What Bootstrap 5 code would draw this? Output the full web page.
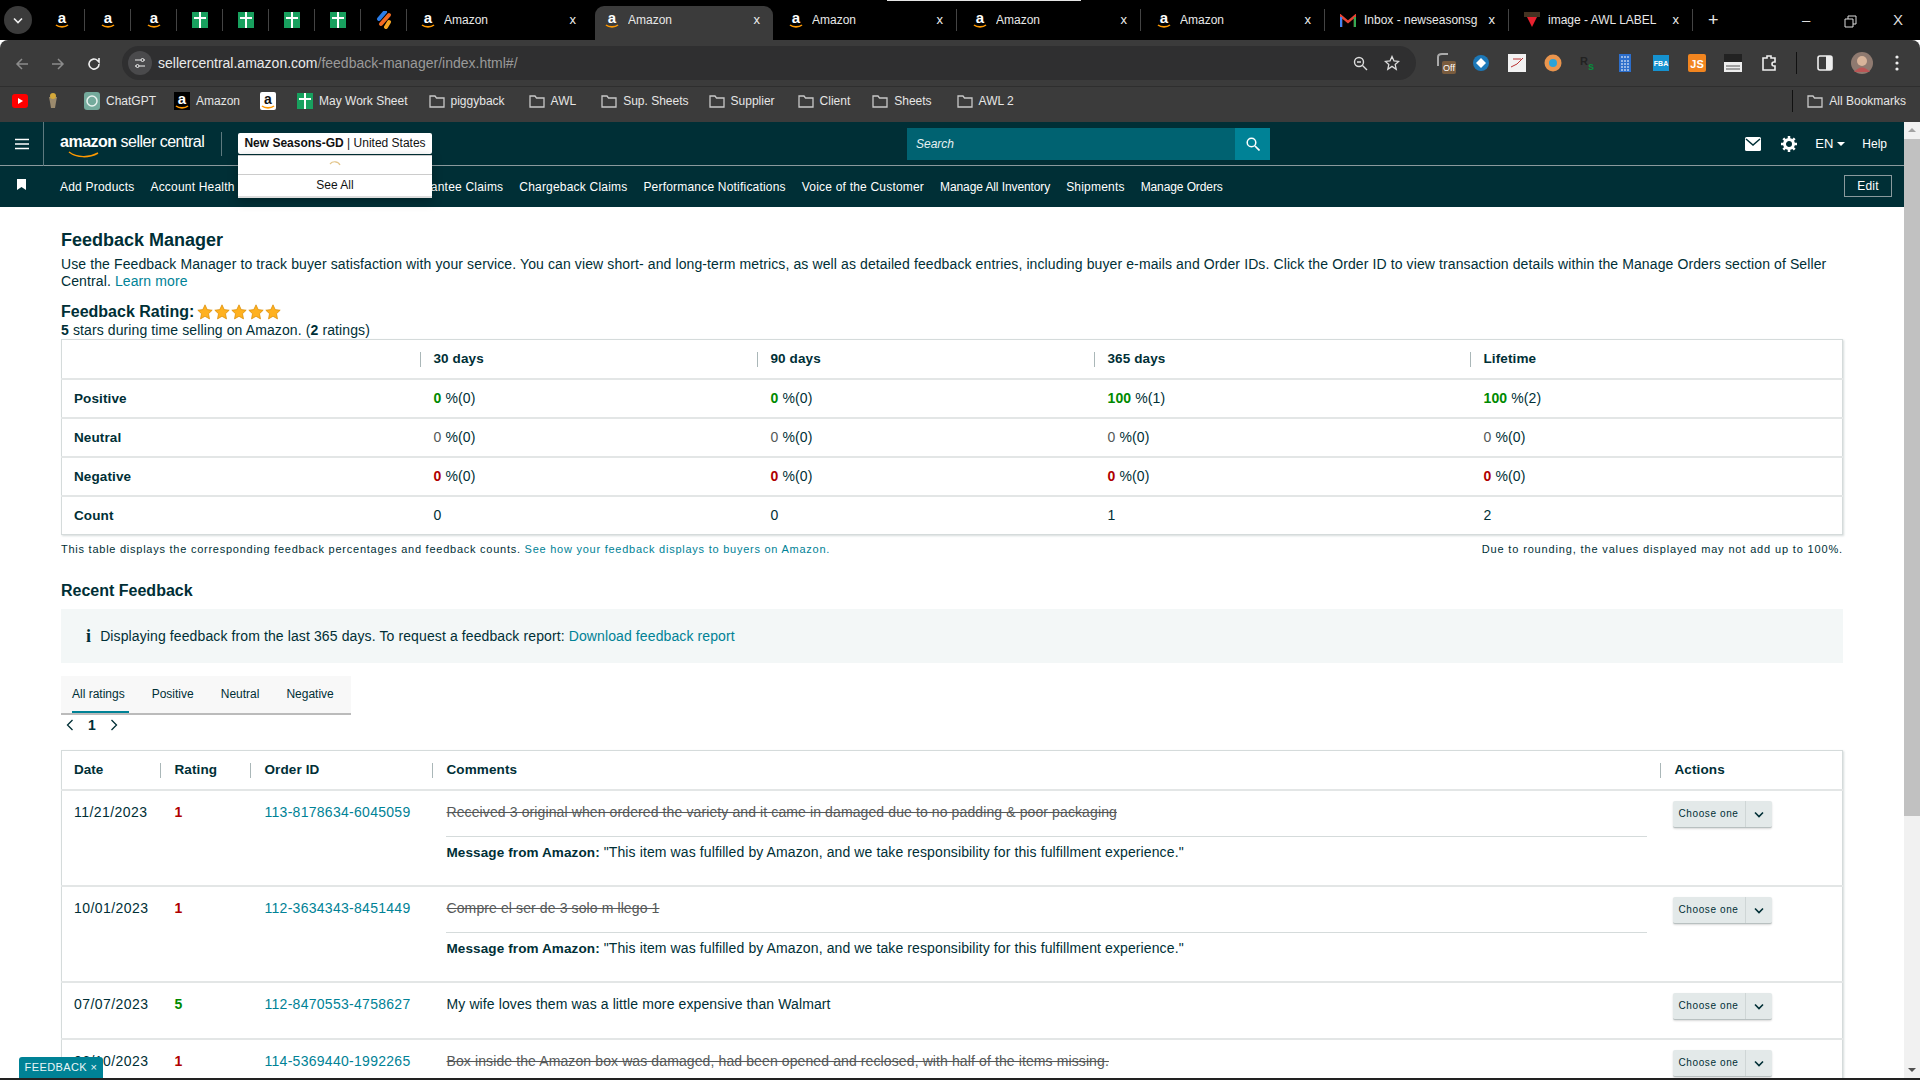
<!DOCTYPE html>
<html lang="en">
<head>
<meta charset="UTF-8">
<title>Feedback Manager</title>
<link href="https://cdn.jsdelivr.net/npm/bootstrap@5.3.0/dist/css/bootstrap.min.css" rel="stylesheet">
<style>
html, body { height: 100%; overflow: hidden; }
body { font-family: "Liberation Sans", Arial, sans-serif; font-size: 14px; color: #002f36; background: #fff; }
a { color: #008296; text-decoration: none; }
.page-wrap { height: 1080px; position: relative; overflow: hidden; }

/* chrome tab strip */
.tab-strip { height: 40px; background: #000; color: #e8e8e8; font-size: 12px; padding-left: 4px; position: relative; }
.top-flash { position: absolute; top: 0; left: 887px; width: 194px; height: 1px; background: #e5e5e5; }
.tab-chev { width: 28px; height: 28px; border-radius: 50%; background: #3b3b3b; margin-right: 7px; flex: none; }
.tab-small { width: 46px; height: 22px; flex: none; border-right: 1px solid #444; }
.tab-wide { width: 184px; height: 22px; flex: none; padding: 0 13px 0 15px; border-right: 1px solid #444; white-space: nowrap; }
.tab-first { width: 188px; padding: 0 19px 0 13px; border-right: 0; }
.tab-wide.tab-on { width: 178px; background: #3b3b3b; border-radius: 9px 9px 0 0; border: 0; height: 34px; margin-top: 6px; padding: 0 13px 6px 9px; }
.tab-title { flex: 1; overflow: hidden; }
.tab-x { font-size: 13px; color: #eee; }
.tab-plus { font-size: 18px; margin-left: 15px; }
.win-btn { position: absolute; top: 8px; color: #ddd; font-size: 15px; line-height: 24px; }

/* address + bookmarks */
.chrome-bar { height: 47px; background: #3b3b3b; border-bottom: 1px solid #2e2e2e; border-radius: 8px 8px 0 0; padding-left: 4px; }
.nav-arrow { width: 36px; flex: none; text-align: center; }
.addr-box { width: 1294px; height: 34px; background: #2f2f30; border-radius: 17px; margin-left: 10px; padding: 0 16px 0 6px; color: #9a9a9a; font-size: 14px; flex: none; }
.addr-host { color: #eaeaea; }
.addr-tune { width: 24px; height: 24px; border-radius: 50%; background: #4a4a4c; margin-right: 6px; }
.ext-icons { margin-left: 20px; gap: 18px; }
.ext-off { margin-right: -4px; }
.ext-side { margin-left: 2px; }
.ext-sep { width: 1px; height: 22px; background: #111; }
.mark-bar { height: 35px; background: #3b3b3b; color: #e6e6e6; font-size: 12px; padding: 0 0 7px 12px; }
.mark-item { display: flex; align-items: center; gap: 6px; white-space: nowrap; flex: none; }

/* seller central header */
.sc-top { height: 44px; background: #002f36; border-bottom: 1px solid #8a9a9d; color: #fff; position: relative; }
.sc-burger { width: 44px; height: 44px; border-right: 1px solid #5e7a7f; flex: none; }
.sc-logo { margin-left: 16px; width: 162px; border-right: 1px solid #5e7a7f; height: 24px; line-height: 20px; flex: none; position: relative; font-size: 16px; letter-spacing: -.5px; }
.sc-logo b { font-weight: 700; }
.sc-logo svg { position: absolute; left: 8px; top: 19px; }
.sc-account { margin-left: 16px; width: 194px; height: 21px; background: #fff; border-radius: 2px; color: #111; font-size: 12px; line-height: 21px; text-align: center; white-space: nowrap; flex: none; }
.sc-search { margin-left: 475px; width: 363px; height: 32px; background: #006271; flex: none; font-style: italic; font-size: 12px; color: #e8f2f3; padding-left: 9px; line-height: 32px; position: relative; }
.sc-search-btn { position: absolute; right: 0; top: 0; width: 35px; height: 32px; background: #008296; }
.sc-right { margin-left: auto; padding-right: 33px; font-size: 12px; }
.sc-gear { margin-left: 20px; }
.sc-lang { margin-left: 18px; font-size: 13px; }
.sc-drop { margin-left: 4px; width: 0; height: 0; border-left: 4px solid transparent; border-right: 4px solid transparent; border-top: 4px solid #fff; }
.sc-help { margin-left: 17px; }
.acct-menu { position: absolute; left: 238px; top: 155px; width: 194px; height: 43px; background: #fff; box-shadow: 0 3px 10px rgba(0,0,0,.25); border-bottom: 2px solid #ddd; z-index: 5; color: #111; font-size: 12px; text-align: center; }
.acct-spin { height: 20px; border-bottom: 1px solid #ccc; border-top: 1px solid #ccc; }
.acct-all { height: 21px; line-height: 21px; }
.sc-nav { height: 41px; background: #002f36; color: #fff; font-size: 12px; white-space: nowrap; position: relative; letter-spacing: .2px; }
.sc-mark { margin: 0 0 4px 17px; }
.sc-nav-links { gap: 16px; margin-left: 34px; }
.sc-nav-claims { margin-left: 116px; }
.sc-nav-tight { letter-spacing: -.1px; }
.sc-edit { position: absolute; left: 1844px; top: 9px; width: 48px; height: 22px; border: 1px solid #8a9a9d; text-align: center; line-height: 20px; }

/* content */
.scroll-track { position: absolute; right: 0; top: 122px; width: 16px; height: 956px; background: #f1f1f1; }
.scroll-thumb { position: absolute; left: 0; right: 0; top: 17px; height: 677px; background: #c1c1c1; }
.scroll-up, .scroll-down { position: absolute; left: 4px; width: 0; height: 0; border-left: 4px solid transparent; border-right: 4px solid transparent; }
.scroll-up { top: 6px; border-bottom: 4px solid #a3a3a3; }
.scroll-down { bottom: 6px; border-top: 4px solid #505050; }
.main-pane { padding: 0 77px 0 61px; height: 871px; overflow: hidden; letter-spacing: .11px; line-height: 17px; font-size: 14px; }
.head-big { font-size: 18px; font-weight: 700; line-height: 22px; margin: 0; padding-top: 22px; letter-spacing: 0; }
.intro-text { margin: 5px 0 0; }
.rating-line { font-size: 16px; font-weight: 700; margin-top: 12px; height: 20px; line-height: 20px; letter-spacing: 0; }
.stars-row { font-size: 0; margin-left: 3px; }
.stars-row svg { margin-right: 1px; }
.panel-table { width: 1782px; table-layout: fixed; border: 1px solid #d5dbdb; box-shadow: 1px 1px 2px #d5dbdb; margin: 0; --bs-table-color: #002f36; }
.panel-table th, .panel-table td { padding: 0 0 0 14px; border-bottom: 2px solid #e3e6e6; vertical-align: middle; height: 39px; }
.panel-table tr:last-child td { border-bottom: 0; }
.panel-table th { position: relative; font-weight: 700; font-size: 13.5px; }
.panel-table th.cut::before { content: ""; position: absolute; left: 0; top: 12px; height: 15px; width: 1px; background: #aab7b8; }
.panel-table .row-name { font-weight: 700; padding-left: 12px; font-size: 13.5px; }
.num-green { color: #008a00; font-weight: 700; }
.num-red { color: #b00000; font-weight: 700; }
.num-grey { color: #565959; }
.foot-note { width: 1782px; font-size: 11px; letter-spacing: .75px; padding-top: 7px; line-height: 15px; }
.foot-right { letter-spacing: .85px; }
.head-mid { font-size: 16px; font-weight: 700; line-height: 20px; margin: 0; padding-top: 24px; letter-spacing: 0; }
.info-box { width: 1782px; background: #f3f7f7; height: 54px; margin-top: 8px; padding-left: 25px; gap: 9px; }
.info-i { font-family: "Liberation Serif", serif; font-weight: 700; font-size: 18px; color: #002f36; }
.rate-tabs { width: 290px; height: 39px; margin-top: 13px; background: #f8f8f8; border-bottom: 2px solid #bbb; font-size: 12px; padding-left: 11px; gap: 27px; }
.rate-tab { height: 37px; line-height: 37px; position: relative; letter-spacing: 0; }
.rate-tab.rate-on::after { content: ""; position: absolute; left: 0; right: -4px; bottom: 0; height: 2px; background: #008296; }
.pager-row { height: 22px; gap: 14px; padding: 0 0 2px 5px; font-weight: 700; }
.fb-table { margin-top: 13px; }
.fb-table td { vertical-align: top; padding-top: 13px; }
.fb-table th, .fb-table td { padding-left: 15px; }
.fb-table th:first-child, .fb-table td:first-child { padding-left: 12px; letter-spacing: .45px; }
.fb-table th:first-child { letter-spacing: 0; }
.fb-table a { letter-spacing: .28px; }
.fb-table th { height: 39px; }
.fb-table td.tall-row { height: 96px; }
.fb-table td.short-row { height: 57px; }
.struck { text-decoration: line-through; color: #565959; }
.msg-line { border-top: 1px solid #d5dbdb; margin-top: 15px; padding-top: 7px; width: 1201px; margin-left: -1px; padding-left: 1px; }
.msg-line b { font-size: 13.5px; }
.act-btn { width: 99px; height: 27px; background: #e3e9e9; border: 0; border-bottom: 1px solid #b8c0c0; border-radius: 2px; box-shadow: 0 1px 2px rgba(0,0,0,.15); font-size: 10px; letter-spacing: .6px; color: #002f36; padding: 0; margin: -3px 0 0 -2px; }
.act-label { width: 73px; border-right: 1px solid #cfd6d6; height: 100%; line-height: 25px; text-align: center; }
.act-caret { flex: 1; }
.fb-tag { position: absolute; left: 19px; top: 1057px; width: 84px; height: 21px; background: #008296; color: #e9f5f6; font-size: 11px; line-height: 21px; text-align: center; border-radius: 3px 3px 0 0; z-index: 6; letter-spacing: .4px; }
.task-line { position: absolute; left: 0; right: 0; bottom: 0; height: 2px; background: #222; }
</style>
</head>
<body>
<svg width="0" height="0" class="position-absolute">
  <symbol id="ic-a" viewBox="0 0 16 18">
    <text x="8" y="11.500" text-anchor="middle" font-family="Liberation Sans" font-weight="700" font-size="15" fill="#fff">a</text>
    <path d="M2 14c3 2.500 9 2.500 12 0" fill="none" stroke="#f90" stroke-width="1.600"/>
  </symbol>
  <symbol id="ic-sheet" viewBox="0 0 16 16">
    <rect width="16" height="16" fill="#18a05e"/>
    <path d="M2 6h12M8 0v16" stroke="#fff" stroke-width="2"/>
  </symbol>
  <symbol id="ic-folder" viewBox="0 0 16 14">
    <path d="M1 2h5l1.500 2H15v9H1z" fill="none" stroke="#c8c8c8" stroke-width="1.300"/>
  </symbol>
  <symbol id="ic-star" viewBox="0 0 16 16">
    <path d="M8 .8l2.200 4.800 5 .6-3.700 3.500 1 5.200L8 12.300l-4.500 2.600 1-5.200L.8 6.200l5-.6z" fill="#ffb11f" stroke="#d98a00" stroke-width=".7"/>
  </symbol>
  <symbol id="ic-caret" viewBox="0 0 10 7">
    <path d="M1 1.500l4 4 4-4" fill="none" stroke="#002f36" stroke-width="1.600"/>
  </symbol>
</svg>

<div class="page-wrap">
  <div class="tab-strip d-flex align-items-center">
    <div class="top-flash"></div>
    <div class="tab-chev d-flex align-items-center justify-content-center"><svg width="10" height="7" viewBox="0 0 10 7"><path d="M1 1.500l4 4 4-4" fill="none" stroke="#eee" stroke-width="1.600"/></svg></div>
    <div class="tab-small d-flex align-items-center justify-content-center"><svg width="16" height="18"><use href="#ic-a"/></svg></div>
    <div class="tab-small d-flex align-items-center justify-content-center"><svg width="16" height="18"><use href="#ic-a"/></svg></div>
    <div class="tab-small d-flex align-items-center justify-content-center"><svg width="16" height="18"><use href="#ic-a"/></svg></div>
    <div class="tab-small d-flex align-items-center justify-content-center"><svg width="16" height="16"><use href="#ic-sheet"/></svg></div>
    <div class="tab-small d-flex align-items-center justify-content-center"><svg width="16" height="16"><use href="#ic-sheet"/></svg></div>
    <div class="tab-small d-flex align-items-center justify-content-center"><svg width="16" height="16"><use href="#ic-sheet"/></svg></div>
    <div class="tab-small d-flex align-items-center justify-content-center"><svg width="16" height="16"><use href="#ic-sheet"/></svg></div>
    <div class="tab-small d-flex align-items-center justify-content-center">
      <svg width="16" height="18" viewBox="0 0 16 18"><path d="M9 1L3 8" stroke="#2b7de9" stroke-width="4" stroke-linecap="round"/><path d="M13 4L5 13" stroke="#f26a21" stroke-width="4" stroke-linecap="round"/><path d="M13 11l-3 5" stroke="#f5a623" stroke-width="4" stroke-linecap="round"/></svg>
    </div>
    <div class="tab-wide tab-first d-flex align-items-center gap-2"><svg width="16" height="18"><use href="#ic-a"/></svg><span class="tab-title">Amazon</span><span class="tab-x">x</span></div>
    <div class="tab-wide tab-on d-flex align-items-center gap-2"><svg width="16" height="18"><use href="#ic-a"/></svg><span class="tab-title">Amazon</span><span class="tab-x">x</span></div>
    <div class="tab-wide d-flex align-items-center gap-2"><svg width="16" height="18"><use href="#ic-a"/></svg><span class="tab-title">Amazon</span><span class="tab-x">x</span></div>
    <div class="tab-wide d-flex align-items-center gap-2"><svg width="16" height="18"><use href="#ic-a"/></svg><span class="tab-title">Amazon</span><span class="tab-x">x</span></div>
    <div class="tab-wide d-flex align-items-center gap-2"><svg width="16" height="18"><use href="#ic-a"/></svg><span class="tab-title">Amazon</span><span class="tab-x">x</span></div>
    <div class="tab-wide d-flex align-items-center gap-2">
      <svg width="16" height="13" viewBox="0 0 16 13"><path d="M1 13V2l7 6 7-6v11" fill="none" stroke="#ea4335" stroke-width="2.400"/><path d="M1 13V3" stroke="#4285f4" stroke-width="2.400"/><path d="M15 13V3" stroke="#34a853" stroke-width="2.400"/></svg>
      <span class="tab-title">Inbox - newseasonsg</span><span class="tab-x">x</span></div>
    <div class="tab-wide d-flex align-items-center gap-2">
      <svg width="16" height="16" viewBox="0 0 16 16"><rect width="16" height="5" fill="#432"/><path d="M3 5h10l-5 10z" fill="#e8212f"/></svg>
      <span class="tab-title">image - AWL LABEL</span><span class="tab-x">x</span></div>
    <span class="tab-plus">+</span>
    <span class="win-btn" style="left:1802px">&#8211;</span>
    <span class="win-btn" style="left:1844px"><svg width="13" height="13" viewBox="0 0 13 13"><path d="M1 4h8v8H1zM4 4V1h8v8H9" fill="none" stroke="#ddd"/></svg></span>
    <span class="win-btn" style="left:1893px">X</span>
  </div>

  <div class="chrome-bar d-flex align-items-center">
    <div class="nav-arrow"><svg width="14" height="14" viewBox="0 0 14 14"><path d="M13 7H2M7 2L2 7l5 5" fill="none" stroke="#8c8c8c" stroke-width="1.500"/></svg></div>
    <div class="nav-arrow"><svg width="14" height="14" viewBox="0 0 14 14"><path d="M1 7h11M7 2l5 5-5 5" fill="none" stroke="#8c8c8c" stroke-width="1.500"/></svg></div>
    <div class="nav-arrow"><svg width="14" height="14" viewBox="0 0 14 14"><path d="M12 7a5 5 0 1 1-1.500-3.500L12 5V1" fill="none" stroke="#eee" stroke-width="1.600"/></svg></div>
    <div class="addr-box d-flex align-items-center">
      <div class="addr-tune d-flex align-items-center justify-content-center"><svg width="12" height="12" viewBox="0 0 12 12"><path d="M1 3h6M10 3h1M1 9h1M5 9h6" stroke="#eee" stroke-width="1.200"/><circle cx="8.500" cy="3" r="1.500" fill="none" stroke="#eee"/><circle cx="3.500" cy="9" r="1.500" fill="none" stroke="#eee"/></svg></div>
      <span><span class="addr-host">sellercentral.amazon.com</span>/feedback-manager/index.html#/</span>
      <span class="ms-auto d-flex align-items-center gap-3">
        <svg width="15" height="15" viewBox="0 0 15 15"><circle cx="6" cy="6" r="4.500" fill="none" stroke="#ddd" stroke-width="1.400"/><path d="M9.500 9.500L14 14M4 6h4" stroke="#ddd" stroke-width="1.400"/></svg>
        <svg width="16" height="16" viewBox="0 0 16 16"><path d="M8 1.500l2 4.400 4.700.5-3.500 3.200 1 4.600L8 11.400l-4.200 2.800 1-4.600L1.300 6.400 6 5.900z" fill="none" stroke="#ddd" stroke-width="1.300"/></svg>
      </span>
    </div>
    <div class="ext-icons d-flex align-items-center">
      <svg class="ext-off" width="22" height="22" viewBox="0 0 22 22"><rect x="6" y="9" width="14" height="13" rx="2" fill="#7a5c3e"/><path d="M2 14V5q0-3 4-3h6" fill="none" stroke="#aaa" stroke-width="2"/><text x="13" y="19" font-size="9" text-anchor="middle" font-family="Liberation Sans" fill="#fff">Off</text></svg>
      <svg width="18" height="18" viewBox="0 0 18 18"><circle cx="9" cy="9" r="8" fill="#1c78b8"/><path d="M9 4l5 5-5 5-5-5z" fill="#fff"/></svg>
      <svg width="18" height="18" viewBox="0 0 18 18"><rect width="18" height="18" fill="#f2f2f2"/><path d="M3 13l6-3 6-6M5 5h8" stroke="#b33" fill="none"/></svg>
      <svg width="18" height="18" viewBox="0 0 18 18"><circle cx="9" cy="9" r="8.500" fill="#e9954e"/><circle cx="9" cy="9" r="4" fill="#2aa3d8"/></svg>
      <svg width="18" height="18" viewBox="0 0 18 18"><text x="0" y="11" font-size="11" font-weight="700" font-family="Liberation Sans" fill="#222">R</text><text x="8" y="16" font-size="11" font-weight="700" font-family="Liberation Sans" fill="#0a8a3c">s</text></svg>
      <svg width="18" height="18" viewBox="0 0 18 18"><rect x="3" width="12" height="18" fill="#2c6ecb"/><path d="M5 3h8M5 7h8M5 10h8M5 13h8M5 16h8" stroke="#fff" stroke-dasharray="2 1"/></svg>
      <svg width="18" height="18" viewBox="0 0 18 18"><rect x="1" y="1" width="16" height="16" fill="#1592d0"/><text x="9" y="12" font-size="7" text-anchor="middle" font-weight="700" font-family="Liberation Sans" fill="#fff">FBA</text></svg>
      <svg width="18" height="18" viewBox="0 0 18 18"><rect width="18" height="18" rx="2" fill="#f2851f"/><text x="9" y="14" font-size="11" text-anchor="middle" font-weight="700" font-family="Liberation Sans" fill="#fff">JS</text></svg>
      <svg width="18" height="18" viewBox="0 0 18 18"><rect width="18" height="18" fill="#eee"/><rect width="18" height="8" fill="#222"/><path d="M2 12h14M2 15h14" stroke="#555"/></svg>
      <svg width="18" height="18" viewBox="0 0 18 18"><path d="M3 4h4V2h4v2h4v4h-1a2 2 0 0 0 0 4h1v4H3z" fill="none" stroke="#eee" stroke-width="1.600"/></svg>
      <div class="ext-sep"></div>
      <svg class="ext-side" width="16" height="16" viewBox="0 0 16 16"><rect x="1" y="1" width="14" height="14" rx="2" fill="none" stroke="#eee" stroke-width="1.600"/><rect x="9" y="1" width="6" height="14" fill="#eee"/></svg>
      <svg width="22" height="22" viewBox="0 0 22 22"><circle cx="11" cy="11" r="11" fill="#8f7a70"/><circle cx="11" cy="9" r="5" fill="#d8b49a"/><path d="M3 20q8-9 16 0" fill="#b55"/></svg>
      <svg class="ms-1" width="4" height="16" viewBox="0 0 4 16"><circle cx="2" cy="2" r="1.600" fill="#eee"/><circle cx="2" cy="8" r="1.600" fill="#eee"/><circle cx="2" cy="14" r="1.600" fill="#eee"/></svg>
    </div>
  </div>

  <div class="mark-bar d-flex align-items-center">
    <svg width="16" height="14" viewBox="0 0 16 14"><rect width="16" height="14" rx="3" fill="#f00"/><path d="M6 4l5 3-5 3z" fill="#fff"/></svg>
    <svg class="ms-3" width="18" height="18" viewBox="0 0 18 18"><path d="M5 5h8l-1 5-1 6H7L6 10z" fill="#9b8a6d"/><circle cx="9" cy="4" r="3" fill="#d4a83a"/></svg>
    <div class="mark-item" style="margin-left:22px"><svg width="16" height="18" viewBox="0 0 16 18"><rect width="16" height="18" rx="3" fill="#74aa9c"/><circle cx="8" cy="9" r="5" fill="none" stroke="#e8f2ef" stroke-width="1.500"/></svg>ChatGPT</div>
    <div class="mark-item" style="margin-left:18px"><svg width="16" height="18"><rect width="16" height="18" fill="#000"/><use href="#ic-a"/></svg>Amazon</div>
    <div class="mark-item" style="margin-left:20px"><svg width="16" height="18"><rect width="16" height="18" rx="2" fill="#fff"/><text x="8" y="12" text-anchor="middle" font-size="14" font-weight="700" font-family="Liberation Sans" fill="#111">a</text><path d="M2 14c3 2.500 9 2.500 12 0" fill="none" stroke="#f90" stroke-width="1.600"/></svg></div>
    <div class="mark-item" style="margin-left:21px"><svg width="16" height="16"><use href="#ic-sheet"/></svg>May Work Sheet</div>
    <div class="mark-item" style="margin-left:21px"><svg width="16" height="14"><use href="#ic-folder"/></svg>piggyback</div>
    <div class="mark-item" style="margin-left:24px"><svg width="16" height="14"><use href="#ic-folder"/></svg>AWL</div>
    <div class="mark-item" style="margin-left:25px"><svg width="16" height="14"><use href="#ic-folder"/></svg>Sup. Sheets</div>
    <div class="mark-item" style="margin-left:20px"><svg width="16" height="14"><use href="#ic-folder"/></svg>Supplier</div>
    <div class="mark-item" style="margin-left:23px"><svg width="16" height="14"><use href="#ic-folder"/></svg>Client</div>
    <div class="mark-item" style="margin-left:22px"><svg width="16" height="14"><use href="#ic-folder"/></svg>Sheets</div>
    <div class="mark-item" style="margin-left:25px"><svg width="16" height="14"><use href="#ic-folder"/></svg>AWL 2</div>
    <div class="mark-item ms-auto" style="padding-right:14px"><span class="ext-sep me-2"></span><svg width="16" height="14"><use href="#ic-folder"/></svg>All Bookmarks</div>
  </div>

  <div class="sc-top d-flex align-items-center">
    <div class="sc-burger d-flex align-items-center justify-content-center"><svg width="14" height="12" viewBox="0 0 14 12"><path d="M0 1.500h14M0 6h14M0 10.500h14" stroke="#fff" stroke-width="1.700"/></svg></div>
    <div class="sc-logo"><b>amazon</b> seller central<svg width="32" height="7" viewBox="0 0 32 7"><path d="M1 1c8 6 20 6 29 1" fill="none" stroke="#f90" stroke-width="1.500"/></svg></div>
    <div class="sc-account"><b>New Seasons-GD</b> | United States</div>
    <div class="sc-search">Search<div class="sc-search-btn d-flex align-items-center justify-content-center"><svg width="14" height="14" viewBox="0 0 14 14"><circle cx="5.500" cy="5.500" r="4.300" fill="none" stroke="#fff" stroke-width="1.500"/><path d="M9 9l4.500 4.500" stroke="#fff" stroke-width="1.700"/></svg></div></div>
    <div class="sc-right d-flex align-items-center">
      <svg width="16" height="14" viewBox="0 0 16 14"><rect width="16" height="14" rx="1.500" fill="#fff"/><path d="M1 2l7 6 7-6" fill="none" stroke="#002f36" stroke-width="1.500"/></svg>
      <svg class="sc-gear" width="16" height="16" viewBox="0 0 16 16"><circle cx="8" cy="8" r="4.500" fill="none" stroke="#fff" stroke-width="3"/><path d="M8 0v3M8 13v3M0 8h3M13 8h3M2.300 2.300l2 2M11.700 11.700l2 2M2.300 13.700l2-2M11.700 4.300l2-2" stroke="#fff" stroke-width="2.500"/></svg>
      <span class="sc-lang">EN</span><span class="sc-drop"></span>
      <span class="sc-help">Help</span>
    </div>
  </div>
  <div class="acct-menu">
    <div class="acct-spin d-flex justify-content-center"><svg width="14" height="14" viewBox="0 0 14 14" class="mt-1"><path d="M2 4a6 6 0 0 1 10 1" fill="none" stroke="#e3c58a" stroke-width="1.200"/></svg></div>
    <div class="acct-all">See All</div>
  </div>
  <div class="sc-nav d-flex align-items-center">
    <svg class="sc-mark" width="9" height="11" viewBox="0 0 9 11"><path d="M0 0h9v11L4.500 8 0 11z" fill="#fff"/></svg>
    <div class="sc-nav-links d-flex align-items-center">
      <span>Add Products</span><span>Account Health</span><span class="sc-nav-claims">A-to-z Guarantee Claims</span><span>Chargeback Claims</span><span>Performance Notifications</span><span>Voice of the Customer</span><span class="sc-nav-tight">Manage All Inventory</span><span>Shipments</span><span class="sc-nav-tight">Manage Orders</span>
    </div>
    <div class="sc-edit">Edit</div>
  </div>

  <div class="main-pane">
    <h1 class="head-big">Feedback Manager</h1>
    <p class="intro-text">Use the Feedback Manager to track buyer satisfaction with your service. You can view short- and long-term metrics, as well as detailed feedback entries, including buyer e-mails and Order IDs. Click the Order ID to view transaction details within the Manage Orders section of Seller Central. <a href="#">Learn more</a></p>
    <div class="rating-line d-flex align-items-center">Feedback Rating:<span class="stars-row d-flex"><svg width="16" height="16"><use href="#ic-star"/></svg><svg width="16" height="16"><use href="#ic-star"/></svg><svg width="16" height="16"><use href="#ic-star"/></svg><svg width="16" height="16"><use href="#ic-star"/></svg><svg width="16" height="16"><use href="#ic-star"/></svg></span></div>
    <div><b>5</b> stars during time selling on Amazon. (<b>2</b> ratings)</div>
    <table class="table panel-table">
      <colgroup><col style="width:358px"><col style="width:337px"><col style="width:337px"><col style="width:376px"><col></colgroup>
      <thead><tr><th></th><th class="cut">30 days</th><th class="cut">90 days</th><th class="cut">365 days</th><th class="cut">Lifetime</th></tr></thead>
      <tbody>
        <tr><td class="row-name">Positive</td><td><span class="num-green">0</span> %(0)</td><td><span class="num-green">0</span> %(0)</td><td><span class="num-green">100</span> %(1)</td><td><span class="num-green">100</span> %(2)</td></tr>
        <tr><td class="row-name">Neutral</td><td><span class="num-grey">0</span> %(0)</td><td><span class="num-grey">0</span> %(0)</td><td><span class="num-grey">0</span> %(0)</td><td><span class="num-grey">0</span> %(0)</td></tr>
        <tr><td class="row-name">Negative</td><td><span class="num-red">0</span> %(0)</td><td><span class="num-red">0</span> %(0)</td><td><span class="num-red">0</span> %(0)</td><td><span class="num-red">0</span> %(0)</td></tr>
        <tr><td class="row-name">Count</td><td>0</td><td>0</td><td>1</td><td>2</td></tr>
      </tbody>
    </table>
    <div class="foot-note d-flex justify-content-between"><span>This table displays the corresponding feedback percentages and feedback counts. <a href="#">See how your feedback displays to buyers on Amazon.</a></span><span class="foot-right">Due to rounding, the values displayed may not add up to 100%.</span></div>

    <h2 class="head-mid">Recent Feedback</h2>
    <div class="info-box d-flex align-items-center"><span class="info-i">i</span><span>Displaying feedback from the last 365 days. To request a feedback report: <a href="#">Download feedback report</a></span></div>
    <div class="rate-tabs d-flex">
      <span class="rate-tab rate-on">All ratings</span><span class="rate-tab">Positive</span><span class="rate-tab">Neutral</span><span class="rate-tab">Negative</span>
    </div>
    <div class="pager-row d-flex align-items-center">
      <svg width="8" height="12" viewBox="0 0 8 12"><path d="M6.500 1L1.500 6l5 5" fill="none" stroke="#002f36" stroke-width="1.300"/></svg>
      <span>1</span>
      <svg width="8" height="12" viewBox="0 0 8 12"><path d="M1.500 1l5 5-5 5" fill="none" stroke="#002f36" stroke-width="1.300"/></svg>
    </div>
    <table class="table panel-table fb-table">
      <colgroup><col style="width:98px"><col style="width:90px"><col style="width:182px"><col style="width:1228px"><col></colgroup>
      <thead><tr><th>Date</th><th class="cut">Rating</th><th class="cut">Order ID</th><th class="cut">Comments</th><th class="cut">Actions</th></tr></thead>
      <tbody>
        <tr>
          <td class="tall-row">11/21/2023</td><td><span class="num-red">1</span></td><td><a href="#">113-8178634-6045059</a></td>
          <td><span class="struck">Received 3 original when ordered the variety and it came in damaged due to no padding &amp; poor packaging</span>
            <div class="msg-line"><b>Message from Amazon:</b> "This item was fulfilled by Amazon, and we take responsibility for this fulfillment experience."</div></td>
          <td><button class="act-btn d-flex align-items-center" type="button"><span class="act-label">Choose one</span><span class="act-caret"><svg width="10" height="7"><use href="#ic-caret"/></svg></span></button></td>
        </tr>
        <tr>
          <td class="tall-row">10/01/2023</td><td><span class="num-red">1</span></td><td><a href="#">112-3634343-8451449</a></td>
          <td><span class="struck">Compre el ser de 3 solo m llego 1</span>
            <div class="msg-line"><b>Message from Amazon:</b> "This item was fulfilled by Amazon, and we take responsibility for this fulfillment experience."</div></td>
          <td><button class="act-btn d-flex align-items-center" type="button"><span class="act-label">Choose one</span><span class="act-caret"><svg width="10" height="7"><use href="#ic-caret"/></svg></span></button></td>
        </tr>
        <tr>
          <td class="short-row">07/07/2023</td><td><span class="num-green">5</span></td><td><a href="#">112-8470553-4758627</a></td>
          <td>My wife loves them was a little more expensive than Walmart</td>
          <td><button class="act-btn d-flex align-items-center" type="button"><span class="act-label">Choose one</span><span class="act-caret"><svg width="10" height="7"><use href="#ic-caret"/></svg></span></button></td>
        </tr>
        <tr>
          <td class="short-row">06/10/2023</td><td><span class="num-red">1</span></td><td><a href="#">114-5369440-1992265</a></td>
          <td><span class="struck">Box inside the Amazon box was damaged, had been opened and reclosed, with half of the items missing.</span></td>
          <td><button class="act-btn d-flex align-items-center" type="button"><span class="act-label">Choose one</span><span class="act-caret"><svg width="10" height="7"><use href="#ic-caret"/></svg></span></button></td>
        </tr>
      </tbody>
    </table>
  </div>

  <div class="scroll-track"><span class="scroll-up"></span><div class="scroll-thumb"></div><span class="scroll-down"></span></div>
  <div class="fb-tag">FEEDBACK &#215;</div>
  <div class="task-line"></div>
</div>
<script src="https://cdn.jsdelivr.net/npm/bootstrap@5.3.0/dist/js/bootstrap.bundle.min.js"></script>
</body>
</html>
